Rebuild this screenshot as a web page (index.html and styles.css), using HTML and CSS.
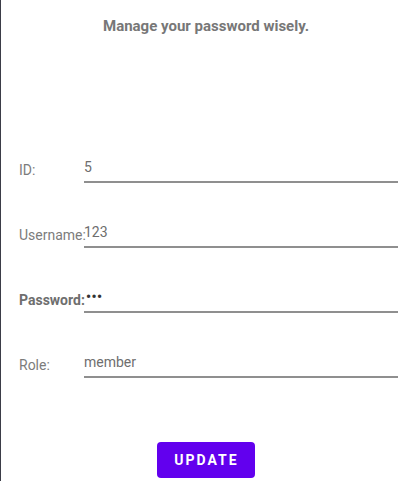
FILE: index.html
```html
<!DOCTYPE html>
<html>
<head>
<meta charset="utf-8">
<link rel="stylesheet" href="styles.css">
</head>
<body>
<div class="screen">
  <h1 class="title">Manage your password wisely.</h1>
  <form class="form">
    <div class="row">
      <span class="label">ID:</span>
      <div class="field">5</div>
    </div>
    <div class="row">
      <span class="label">Username:</span>
      <div class="field">123</div>
    </div>
    <div class="row">
      <span class="label label-bold">Password:</span>
      <div class="field field-dots">&#8226;&#8226;&#8226;</div>
    </div>
    <div class="row">
      <span class="label">Role:</span>
      <div class="field">member</div>
    </div>
    <div class="actions">
      <button type="button" class="btn">UPDATE</button>
    </div>
  </form>
</div>
</body>
</html>
```
FILE: styles.css
```css
* { box-sizing: border-box; }
html, body {
  margin: 0;
  padding: 0;
  background: #ffffff;
}
body {
  font-family: Roboto, "Liberation Sans", sans-serif;
  width: 411px;
  height: 481px;
  overflow: hidden;
}
.screen {
  width: 411px;
  height: 481px;
  border-left: 1px solid #3b3d47;
  background: #ffffff;
  display: flex;
  flex-direction: column;
}
.title {
  margin: 18px 0 0;
  font-size: 15px;
  line-height: 17px;
  font-weight: 700;
  color: #777777;
  text-align: center;
}
.form {
  margin: 124px 0 0;
  display: flex;
  flex-direction: column;
  gap: 41px;
}
.row {
  display: flex;
  align-items: flex-end;
  height: 24px;
  padding-left: 18px;
  padding-right: 13px;
}
.label {
  flex: 0 0 65px;
  width: 65px;
  margin-bottom: 5px;
  font-size: 14px;
  line-height: 16px;
  color: #7c7c7c;
  white-space: nowrap;
}
.label-bold {
  font-weight: 700;
  color: #6e6e6e;
}
.field {
  flex: 1;
  height: 24px;
  font-size: 14px;
  line-height: 16px;
  padding: 0 0 6px 0;
  color: #6e6e6e;
  border-bottom: 2px solid #8f8f8f;
}
.field-dots {
  padding-left: 2px;
  color: #333333;
  font-weight: 700;
  letter-spacing: 0.5px;
}
.actions {
  margin-top: 23px;
  display: flex;
  justify-content: center;
}
.btn {
  width: 98px;
  height: 36px;
  margin-left: -1px;
  border: none;
  border-radius: 4px;
  background: #6200ee;
  color: #ffffff;
  font-family: Roboto, "Liberation Sans", sans-serif;
  font-size: 14px;
  font-weight: 700;
  letter-spacing: 2px;
  padding: 0 0 0 2px;
}
```
